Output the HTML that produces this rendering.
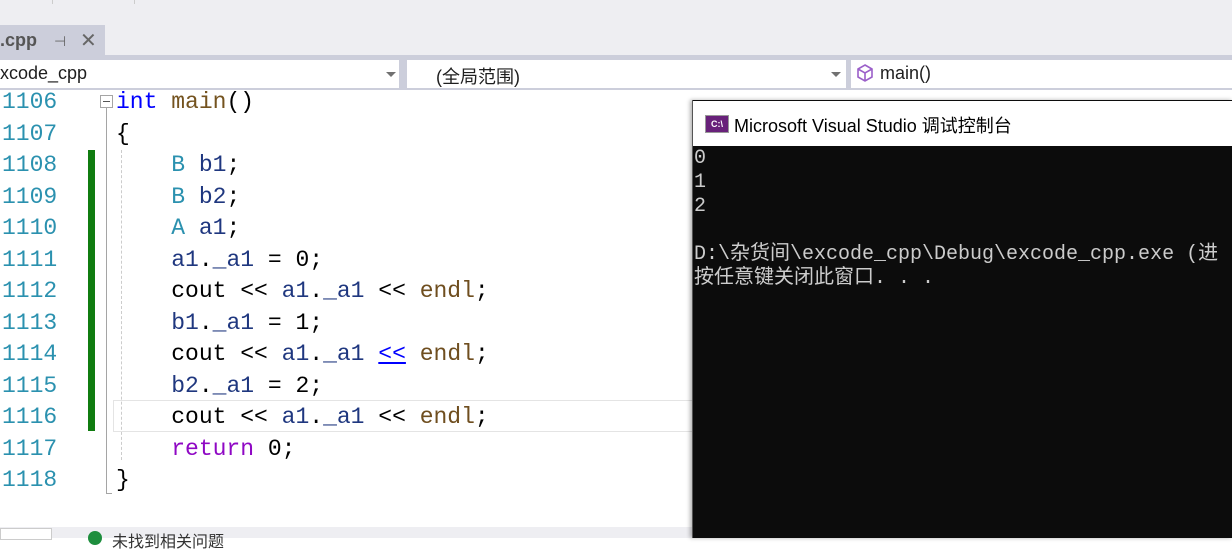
<!DOCTYPE html>
<html><head><meta charset="utf-8"><style>
body{margin:0;width:1232px;height:538px;overflow:hidden;background:#fff;position:relative;font-family:"Liberation Sans","Noto Sans CJK SC",sans-serif}
.a{position:absolute}
.code{font-family:"Liberation Mono","Noto Sans CJK SC",monospace;font-size:23px;line-height:31.5px;white-space:pre}
.ln{color:#2b91af}
.kw{color:#0000ff}.fn{color:#74531f}.ty{color:#2b91af}.v{color:#1f377f}.en{color:#6f4e1f}.rt{color:#8f08c4}
.con{font-family:"Liberation Mono","Noto Sans CJK SC",monospace;font-size:20px;line-height:24px;color:#ccc;white-space:pre}
</style></head><body>
<div class="a" style="left:0;top:0;width:1232px;height:56px;background:#eeeef2"></div>
<div class="a" style="left:52px;top:0;width:1px;height:4px;background:#ccc"></div>
<div class="a" style="left:134px;top:0;width:1px;height:4px;background:#ccc"></div>
<div class="a" style="left:0;top:25px;width:105px;height:30px;background:#cccedb"></div>
<div class="a" style="left:0;top:30px;font-size:18px;font-weight:bold;color:#555">.cpp</div>
<div class="a" style="left:54px;top:33px;font-size:14px;color:#666">⊣</div>
<div class="a" style="left:80px;top:28px;font-size:20px;color:#666">✕</div>
<div class="a" style="left:0;top:55px;width:1232px;height:35px;background:#cccedb"></div>
<div class="a" style="left:0;top:60px;width:399px;height:28px;background:#fff"></div>
<div class="a" style="left:0;top:63px;font-size:18px;color:#1e1e1e">xcode_cpp</div>
<div class="a" style="left:386px;top:72px;border:5px solid transparent;border-top-color:#717171"></div>
<div class="a" style="left:407px;top:60px;width:439px;height:28px;background:#fff"></div>
<div class="a" style="left:436px;top:63px;font-size:18px;color:#1e1e1e">(全局范围)</div>
<div class="a" style="left:831px;top:72px;border:5px solid transparent;border-top-color:#717171"></div>
<div class="a" style="left:851px;top:60px;width:381px;height:28px;background:#fff"></div>
<svg class="a" style="left:855px;top:63px" width="20" height="20" viewBox="0 0 20 20"><path d="M10 2 L17 6 L17 14 L10 18 L3 14 L3 6 Z M3 6 L10 10 L17 6 M10 10 L10 18" fill="none" stroke="#9b5fc9" stroke-width="1.6"/></svg>
<div class="a" style="left:880px;top:63px;font-size:18px;color:#1e1e1e">main()</div>
<div class="a" style="left:88px;top:150px;width:7px;height:281px;background:#107c10"></div>
<div class="a" style="left:106px;top:108px;width:1px;height:386px;background:#a5a5a5"></div>
<div class="a" style="left:106px;top:493px;width:6px;height:1px;background:#a5a5a5"></div>
<div class="a" style="left:100px;top:95px;width:11px;height:11px;border:1px solid #a5a5a5;background:#fff"></div>
<div class="a" style="left:103px;top:101px;width:7px;height:1px;background:#555"></div>
<div class="a" style="left:121px;top:150px;width:0;height:310px;border-left:1px dashed #ccc"></div>
<div class="a" style="left:113px;top:400px;width:580px;height:30px;border:1px solid #e4e4e4"></div>
<div class="a code ln" style="left:2px;top:87px">1106
1107
1108
1109
1110
1111
1112
1113
1114
1115
1116
1117
1118</div>
<div class="a code" style="left:116px;top:87px"><span class="kw">int</span> <span class="fn">main</span>()
{
    <span class="ty">B</span> <span class="v">b1</span>;
    <span class="ty">B</span> <span class="v">b2</span>;
    <span class="ty">A</span> <span class="v">a1</span>;
    <span class="v">a1</span>.<span class="v">_a1</span> = 0;
    cout &lt;&lt; <span class="v">a1</span>.<span class="v">_a1</span> &lt;&lt; <span class="en">endl</span>;
    <span class="v">b1</span>.<span class="v">_a1</span> = 1;
    cout &lt;&lt; <span class="v">a1</span>.<span class="v">_a1</span> <span style="color:#0000ff;text-decoration:underline">&lt;&lt;</span> <span class="en">endl</span>;
    <span class="v">b2</span>.<span class="v">_a1</span> = 2;
    cout &lt;&lt; <span class="v">a1</span>.<span class="v">_a1</span> &lt;&lt; <span class="en">endl</span>;
    <span class="rt">return</span> 0;
}</div>
<div class="a" style="left:0;top:527px;width:693px;height:11px;background:#eeeef2"></div>
<div class="a" style="left:0;top:528px;width:50px;height:10px;background:#fff;border:1px solid #ccc"></div>
<div class="a" style="left:88px;top:531px;width:14px;height:14px;border-radius:50%;background:#1e8e3e"></div>
<div class="a" style="left:112px;top:528px;font-size:16px;color:#333">未找到相关问题</div>
<div class="a" style="left:692px;top:100px;width:540px;height:438px;background:#0c0c0c;border-left:1px solid #555;box-shadow:-2px 0 4px rgba(0,0,0,.3)"></div>
<div class="a" style="left:693px;top:101px;width:539px;height:45px;background:#fff"></div>
<div class="a" style="left:705px;top:115px;width:22px;height:16px;background:#68217a;border:1px solid #999;color:#fff;font-size:9px;line-height:16px;text-align:center;font-weight:bold">C:\</div>
<div class="a" style="left:734px;top:112px;font-size:18px;color:#000">Microsoft Visual Studio 调试控制台</div>
<div class="a con" style="left:694px;top:147px">0
1
2

D:\杂货间\excode_cpp\Debug\excode_cpp.exe (进
按任意键关闭此窗口. . .</div>
</body></html>
